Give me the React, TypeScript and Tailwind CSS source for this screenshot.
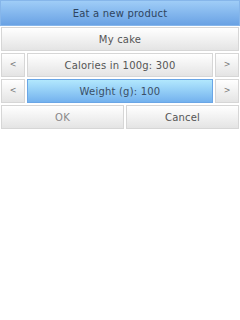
import React from "react";

const font = { fontFamily: '"DejaVu Sans", sans-serif' };

function Btn({ children, cls = "", blue = false }: { children: React.ReactNode; cls?: string; blue?: boolean }) {
  return (
    <div
      className={
        "m-px flex h-[24px] items-center justify-center border " +
        (blue
          ? "border-[#6aa6e6] bg-gradient-to-b from-[#b2e8fd] to-[#74b2ee] text-[#3a4e66] "
          : "border-[#d6d6d6] bg-gradient-to-b from-[#ffffff] to-[#e4e4e4] text-[#555] ") +
        cls
      }
    >
      {children}
    </div>
  );
}

export default function App() {
  return (
    <div className="h-[320px] w-[240px] bg-white" style={font}>
      <div className="flex h-[26px] items-center justify-center border border-[#86b6ea] bg-gradient-to-b from-[#9fcdf7] to-[#6aa2e4] text-[10px] tracking-[0.2px] text-[#2e4460]">
        Eat a new product
      </div>
      <Btn cls="w-[238px] text-[10px] tracking-[0.2px]">My cake</Btn>
      <div className="flex">
        <Btn cls="w-[24px] text-[8px] text-[#777]">&lt;</Btn>
        <Btn cls="w-[186px] text-[10px] tracking-[0.2px]">Calories in 100g: 300</Btn>
        <Btn cls="w-[24px] text-[8px] text-[#777]">&gt;</Btn>
      </div>
      <div className="flex">
        <Btn cls="w-[24px] text-[8px] text-[#777]">&lt;</Btn>
        <Btn blue cls="w-[186px] text-[10px] tracking-[0.2px]">Weight (g): 100</Btn>
        <Btn cls="w-[24px] text-[8px] text-[#777]">&gt;</Btn>
      </div>
      <div className="flex">
        <Btn cls="w-[123px] text-[10px] tracking-[0.2px] text-[#888]">OK</Btn>
        <Btn cls="w-[113px] text-[10px] tracking-[0.2px]">Cancel</Btn>
      </div>
    </div>
  );
}
